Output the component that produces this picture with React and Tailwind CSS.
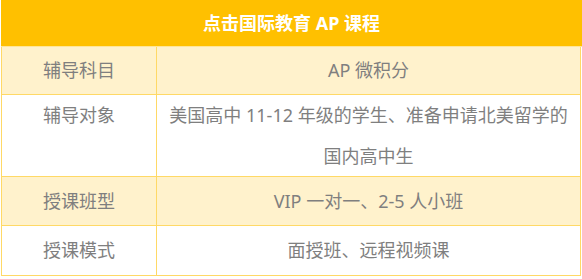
import React from "react";

const rows = [
  { label: "辅导科目", value: ["AP 微积分"], tinted: true, h: "h-[48px]" },
  {
    label: "辅导对象",
    value: ["美国高中 11-12 年级的学生、准备申请北美留学的", "国内高中生"],
    tinted: false,
    h: "h-[82px]",
    top: true,
  },
  { label: "授课班型", value: ["VIP 一对一、2-5 人小班"], tinted: true, h: "h-[49px]" },
  { label: "授课模式", value: ["面授班、远程视频课"], tinted: false, h: "h-[50px]" },
];

function Row({ data }) {
  return (
    <div
      className={`grid grid-cols-[155px_1fr] border-b border-[#ffd966] ${data.h} ${
        data.tinted ? "bg-[#fff2cc]" : "bg-white"
      }`}
    >
      <div
        className={`flex justify-center border-r border-[#ffd966] leading-[41px] ${
          data.top ? "items-start" : "items-center"
        }`}
      >
        {data.label}
      </div>
      <div className="flex flex-col items-center justify-center leading-[41px]">
        {data.value.map((line) => (
          <span key={line}>{line}</span>
        ))}
      </div>
    </div>
  );
}

export default function App() {
  return (
    <div
      className="w-[582px] h-[279px] overflow-hidden bg-white pl-px text-[18px] text-[#7f7f7f]"
      style={{ fontFamily: '"Noto Sans", "Noto Sans CJK SC", sans-serif' }}
    >
      {/* Header */}
      <div className="h-[47px] bg-[#ffc000] flex items-center justify-center font-bold text-white border-b border-[#ffe699]">
        点击国际教育 AP 课程
      </div>

      {/* Body */}
      <div className="w-[580px] border-l border-r border-[#ffd966]">
        {rows.map((r) => (
          <Row key={r.label} data={r} />
        ))}
      </div>
    </div>
  );
}
